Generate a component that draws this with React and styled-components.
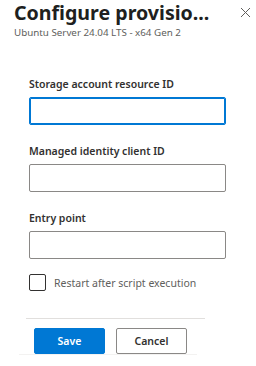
import React from "react";
import styled, { createGlobalStyle } from "styled-components";

const GlobalStyle = createGlobalStyle`
  body {
    margin: 0;
    background: #fff;
    font-family: "Noto Sans", "Open Sans", Arial, sans-serif;
  }
`;

const Panel = styled.div`
  width: 256px;
  height: 366px;
  overflow: hidden;
  background: #fff;
`;

const Header = styled.header`
  display: flex;
  justify-content: space-between;
  align-items: flex-start;
  padding: 0 4px 0 14px;
`;

const TitleBlock = styled.div`
  display: flex;
  flex-direction: column;
`;

const Title = styled.h1`
  margin: 1px 0 0;
  font-size: 19.6px;
  line-height: 24px;
  font-weight: 700;
  color: #201f1e;
  white-space: nowrap;
`;

const Subtitle = styled.div`
  margin-top: 2px;
  font-size: 9.8px;
  line-height: 12px;
  color: #605e5c;
  white-space: nowrap;
`;

const CloseButton = styled.button`
  border: none;
  background: none;
  padding: 0;
  margin-top: 6px;
  width: 14px;
  height: 12px;
  display: flex;
  align-items: center;
  justify-content: center;
  cursor: pointer;
`;

const Form = styled.form`
  display: flex;
  flex-direction: column;
  padding: 38px 0 0 29px;
  width: 197px;
`;

const Field = styled.div`
  display: flex;
  flex-direction: column;
  gap: 6px;
  margin-bottom: 19px;
`;

const Label = styled.label`
  font-size: 10.5px;
  line-height: 14px;
  font-weight: 600;
  color: #323130;
`;

const Input = styled.input`
  box-sizing: border-box;
  width: 197px;
  height: 28px;
  border: 1px solid ${(p) => (p.$focused ? "#0078d4" : "#8a8886")};
  box-shadow: ${(p) => (p.$focused ? "inset 0 0 0 1px #0078d4" : "none")};
  border-radius: 2px;
  outline: none;
  padding: 0 8px;
  font-family: inherit;
`;

const CheckRow = styled.label`
  display: flex;
  align-items: center;
  gap: 8px;
  margin-top: -4px;
  font-size: 10.5px;
  line-height: 14px;
  color: #605e5c;
`;

const Box = styled.span`
  box-sizing: border-box;
  width: 17px;
  height: 17px;
  border: 1px solid #323130;
  border-radius: 2px;
`;

const Footer = styled.footer`
  margin: 27px 0 0 26px;
  width: 171px;
  border-top: 1px solid #e1dfdd;
  padding: 9px 0 0 8px;
  display: flex;
  gap: 11px;
`;

const Button = styled.button`
  box-sizing: border-box;
  width: 71px;
  height: 26px;
  border-radius: 2px;
  font-family: inherit;
  font-size: 10.5px;
  font-weight: 600;
  background: ${(p) => (p.$primary ? "#0078d4" : "#fff")};
  color: ${(p) => (p.$primary ? "#fff" : "#323130")};
  border: 1px solid ${(p) => (p.$primary ? "#0078d4" : "#8a8886")};
  cursor: pointer;
`;

const BottomLine = styled.div`
  margin-left: 19px;
  width: 178px;
  border-top: 1px solid #f3f2f1;
`;

export default function App() {
  return (
    <Panel>
      <GlobalStyle />
      <Header>
        <TitleBlock>
          <Title>Configure provisio...</Title>
          <Subtitle>Ubuntu Server 24.04 LTS - x64 Gen 2</Subtitle>
        </TitleBlock>
        <CloseButton aria-label="Close">
          <svg width="11" height="11" viewBox="0 0 11 11">
            <path d="M1 1L10 10M10 1L1 10" stroke="#605e5c" strokeWidth="1" />
          </svg>
        </CloseButton>
      </Header>
      <Form>
        <Field>
          <Label>Storage account resource ID</Label>
          <Input $focused />
        </Field>
        <Field>
          <Label>Managed identity client ID</Label>
          <Input />
        </Field>
        <Field>
          <Label>Entry point</Label>
          <Input />
        </Field>
        <CheckRow>
          <Box />
          Restart after script execution
        </CheckRow>
      </Form>
      <Footer>
        <Button $primary>Save</Button>
        <Button>Cancel</Button>
      </Footer>
      <BottomLine />
    </Panel>
  );
}
